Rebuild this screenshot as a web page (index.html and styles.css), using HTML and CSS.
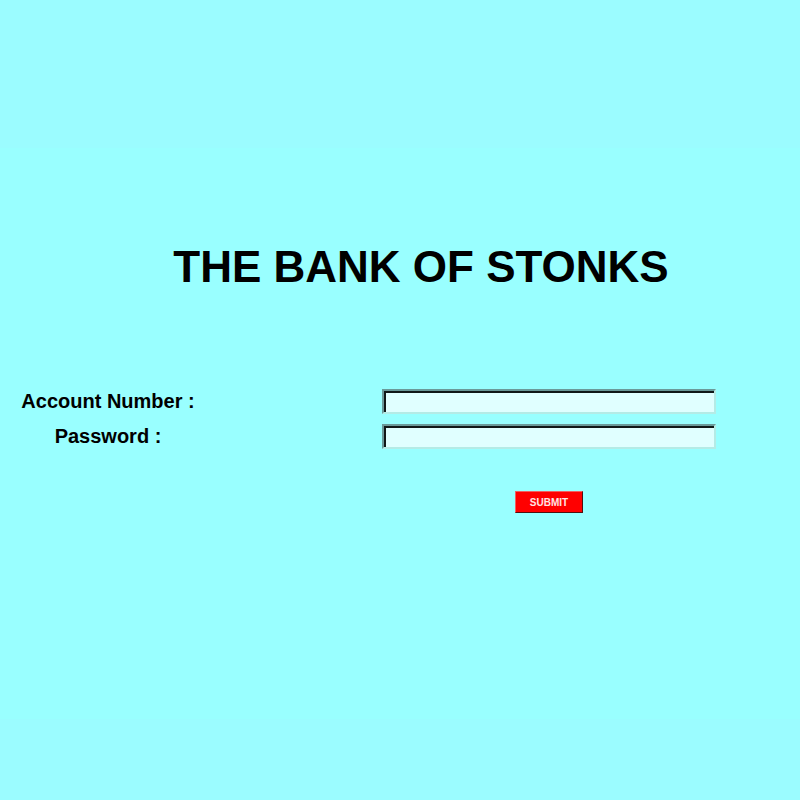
FILE: index.html
```html
<!DOCTYPE html>
<html lang="en">
<head>
<meta charset="utf-8">
<title>The Bank of Stonks</title>
<link rel="stylesheet" href="styles.css">
</head>
<body>
<main class="login">
  <h1 class="title">THE BANK OF STONKS</h1>
  <form class="form">
    <div class="row">
      <label class="label" for="account">Account Number :</label>
      <input class="field" id="account" type="text">
    </div>
    <div class="row">
      <label class="label" for="password">Password :</label>
      <input class="field" id="password" type="password">
    </div>
    <div class="actions">
      <button class="submit" type="button">SUBMIT</button>
    </div>
  </form>
</main>
</body>
</html>
```
FILE: styles.css
```css
* {
  box-sizing: border-box;
}

body {
  display: flow-root;
  margin: 0;
  min-height: 100vh;
  background: #9bfcff;
  color: #000;
  font-family: "Liberation Sans", Arial, sans-serif;
}

.login {
  margin-top: 148px;
  padding: 92px 84px 206px 18px;
  background: #99ffff;
}

.title {
  margin: 0 -42px 0 66px;
  font-size: 44px;
  line-height: 54px;
  text-align: center;
  white-space: nowrap;
}

.form {
  margin-top: 95px;
  display: flex;
  flex-direction: column;
  gap: 10px;
}

.row {
  display: grid;
  grid-template-columns: 180px 334px;
  justify-content: space-between;
  align-items: start;
}

.label {
  font-size: 20px;
  line-height: 24px;
  font-weight: bold;
  text-align: center;
}

.field {
  width: 100%;
  height: 25px;
  padding: 0 4px;
  border: 2px solid;
  border-color: #6b9a9a #b4ebe6 #b4ebe6 #6b9a9a;
  border-radius: 0;
  box-shadow: inset 2px 2px 0 #101818;
  background: #e0ffff;
  font: inherit;
  font-size: 16px;
}

.actions {
  width: 334px;
  margin: 32px 0 0 auto;
  display: flex;
  justify-content: center;
}

.submit {
  width: 68px;
  height: 22px;
  padding: 0;
  border: 1px solid;
  border-color: #f06060 #501010 #501010 #f06060;
  border-radius: 0;
  background: #f00;
  color: #ffe4e4;
  font: bold 10px "Liberation Sans", Arial, sans-serif;
}
```
